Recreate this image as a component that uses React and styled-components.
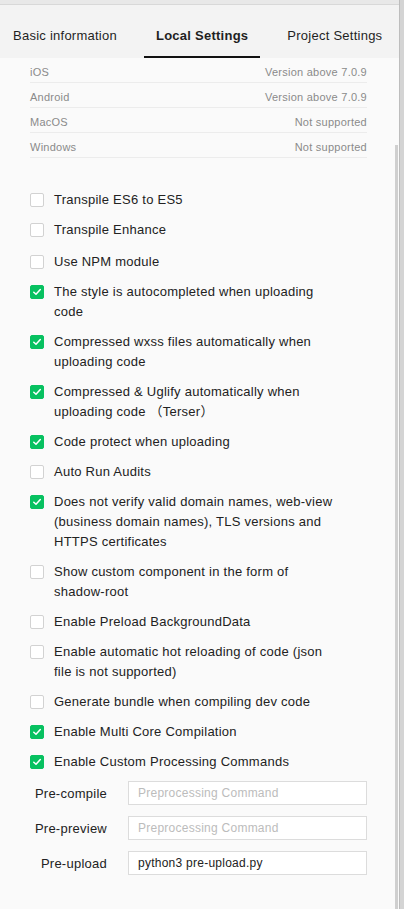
import React from "react";
import styled, { createGlobalStyle } from "styled-components";

const Global = createGlobalStyle`
  html, body {
    margin: 0;
    padding: 0;
    background: #d6d6d6;
  }
  body {
    font-family: "Liberation Sans", Arial, "Noto Sans CJK SC", sans-serif;
    letter-spacing: 0.25px;
    -webkit-font-smoothing: antialiased;
  }
`;

const Page = styled.div`
  display: flex;
  height: 909px;
  overflow: hidden;
`;

const Panel = styled.div`
  width: 399px;
  display: flex;
  flex-direction: column;
  background: #fafafa;
  position: relative;
`;

const Backdrop = styled.div`
  flex: 1;
  background: #d4d4d4;
  border-left: 1px solid #bdbdbd;
`;

const TopStrip = styled.div`
  height: 4px;
  background: #e8e8e8;
  border-bottom: 1px solid #d8d8d8;
`;

const TabBar = styled.div`
  height: 53px;
  box-sizing: border-box;
  padding: 8px 0 0 1px;
  background: #f3f3f3;
  display: flex;
  align-items: stretch;
  gap: 15px;
`;

const Tab = styled.div`
  position: relative;
  display: flex;
  align-items: center;
  padding: 0 12px;
  font-size: 13px;
  color: #1f1f1f;
  font-weight: ${(p) => (p.$active ? 700 : 400)};
  white-space: nowrap;

  &::after {
    content: "";
    position: absolute;
    left: 0;
    right: 0;
    bottom: 0;
    height: 2px;
    background: ${(p) => (p.$active ? "#111" : "transparent")};
  }
`;

const Content = styled.div`
  flex: 1;
  padding: 0 32px 0 30px;
`;

const Scrollbar = styled.div`
  position: absolute;
  right: 1px;
  top: 145px;
  bottom: 0;
  width: 3px;
  background: #cfcfcf;
`;

const InfoRow = styled.div`
  height: 21px;
  padding-top: 3px;
  display: flex;
  align-items: center;
  justify-content: space-between;
  border-bottom: 1px solid #ececec;
  font-size: 11px;
  color: #8a8a8a;
`;

const Options = styled.div`
  margin-top: 32px;
  display: flex;
  flex-direction: column;
  gap: 10px;
`;

const Option = styled.label`
  display: flex;
  align-items: flex-start;
  gap: 10px;
  font-size: 13px;
  line-height: 20px;
  color: #222;
  margin-top: ${(p) => (p.$nudge ? "2px" : "0")};
`;

const Box = styled.span`
  flex: none;
  width: 14px;
  height: 14px;
  margin-top: 3px;
  box-sizing: border-box;
  border-radius: 2px;
  border: 1px solid ${(p) => (p.$on ? "#07c160" : "#d2d2d2")};
  background: ${(p) => (p.$on ? "#07c160" : "#fff")};
  display: flex;
  align-items: center;
  justify-content: center;
`;

const OptionText = styled.span`
  max-width: 286px;
`;

const Commands = styled.div`
  margin-top: 9px;
  display: grid;
  grid-template-columns: 77px 1fr;
  column-gap: 21px;
  row-gap: 11px;
  align-items: center;
`;

const CmdLabel = styled.span`
  text-align: right;
  font-size: 13px;
  color: #222;
  white-space: nowrap;
`;

const CmdInput = styled.input`
  height: 24px;
  box-sizing: border-box;
  border: 1px solid #dcdcdc;
  background: #fff;
  padding: 0 9px;
  font-family: inherit;
  letter-spacing: inherit;
  font-size: 12px;
  color: #222;
  outline: none;
  width: 100%;

  &::placeholder {
    color: #bcbcbc;
  }
`;

const info = [
  ["iOS", "Version above 7.0.9"],
  ["Android", "Version above 7.0.9"],
  ["MacOS", "Not supported"],
  ["Windows", "Not supported"],
];

const options = [
  ["Transpile ES6 to ES5", false],
  ["Transpile Enhance", false],
  ["Use NPM module", false, true],
  ["The style is autocompleted when uploading code", true],
  ["Compressed wxss files automatically when uploading code", true],
  ["Compressed & Uglify automatically when uploading code \uFF08Terser\uFF09", true],
  ["Code protect when uploading", true],
  ["Auto Run Audits", false],
  [
    "Does not verify valid domain names, web-view (business domain names), TLS versions and HTTPS certificates",
    true,
  ],
  ["Show custom component in the form of shadow-root", false],
  ["Enable Preload BackgroundData", false],
  ["Enable automatic hot reloading of code (json file is not supported)", false],
  ["Generate bundle when compiling dev code", false],
  ["Enable Multi Core Compilation", true],
  ["Enable Custom Processing Commands", true],
];

const commands = [
  ["Pre-compile", ""],
  ["Pre-preview", ""],
  ["Pre-upload", "python3 pre-upload.py"],
];

function Check() {
  return (
    <svg width="10" height="10" viewBox="0 0 10 10">
      <path d="M1.8 5.2 L4 7.3 L8.3 2.6" fill="none" stroke="#fff" strokeWidth="1.5" strokeLinecap="round" strokeLinejoin="round" />
    </svg>
  );
}

export default function App() {
  return (
    <>
      <Global />
      <Page>
        <Panel>
          <TopStrip />
          <TabBar>
            <Tab>Basic information</Tab>
            <Tab $active>Local Settings</Tab>
            <Tab>Project Settings</Tab>
          </TabBar>
          <Content>
            {info.map(([k, v]) => (
              <InfoRow key={k}>
                <span>{k}</span>
                <span>{v}</span>
              </InfoRow>
            ))}
            <Options>
              {options.map(([text, on, nudge]) => (
                <Option key={text} $nudge={nudge}>
                  <Box $on={on}>{on && <Check />}</Box>
                  <OptionText>{text}</OptionText>
                </Option>
              ))}
            </Options>
            <Commands>
              {commands.map(([label, value]) => (
                <React.Fragment key={label}>
                  <CmdLabel>{label}</CmdLabel>
                  <CmdInput placeholder="Preprocessing Command" defaultValue={value} />
                </React.Fragment>
              ))}
            </Commands>
          </Content>
          <Scrollbar />
        </Panel>
        <Backdrop />
      </Page>
    </>
  );
}
